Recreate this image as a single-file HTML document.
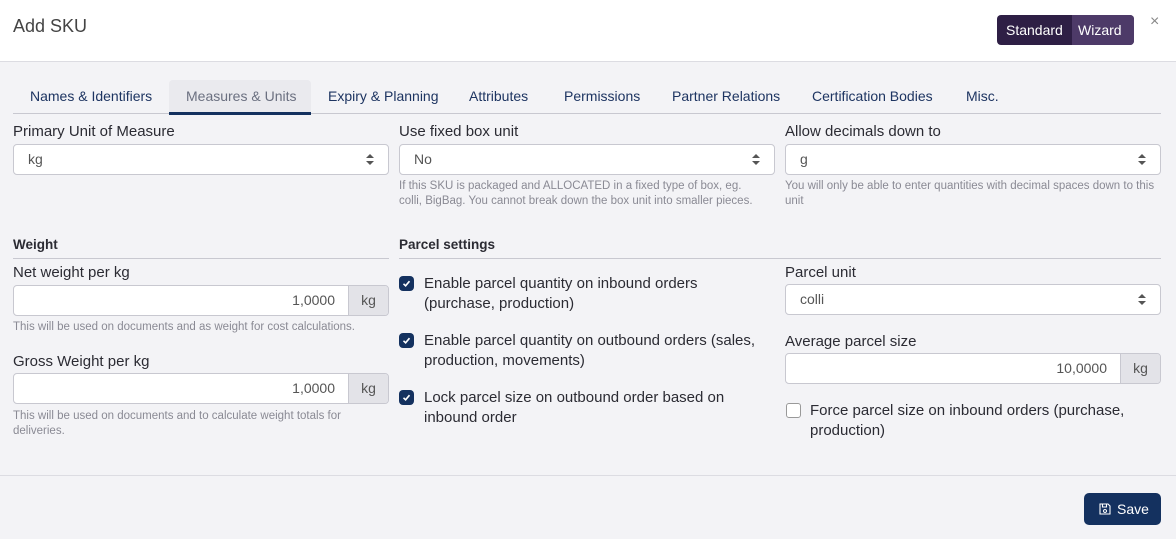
<!DOCTYPE html>
<html><head><meta charset="utf-8"><style>
*{box-sizing:border-box;margin:0;padding:0}
body{width:1176px;height:539px;background:#f3f3f6;font-family:"Liberation Sans",sans-serif;color:#2b2b33;position:relative;overflow:hidden}
.a{position:absolute;white-space:nowrap}
.hdr{position:absolute;left:0;top:0;width:1176px;height:62px;background:#fff;border-bottom:1px solid #dcdce2}
.tab{position:absolute;top:80px;height:34px;font-size:14px;color:#1d3461;line-height:32px;text-align:center}
.lbl{font-size:15px;color:#2b2b33}
.sel{position:absolute;height:31px;background:#fff;border:1px solid #c8c8d0;border-radius:4px;font-size:14px;color:#555;line-height:29px;padding-left:14px}
.sel:after{content:"";position:absolute;right:14px;top:9px;border:4px solid transparent;border-bottom:4px solid #555;border-top:none}
.sel:before{content:"";position:absolute;right:14px;top:16px;border:4px solid transparent;border-top:4px solid #555;border-bottom:none}
.inp{position:absolute;height:31px;background:#fff;border:1px solid #c8c8d0;border-radius:4px;font-size:14px;color:#555;line-height:29px;overflow:hidden}
.inp .v{position:absolute;right:53px}
.inp .u{position:absolute;right:0;top:0;width:40px;height:29px;background:#e3e3e8;border-left:1px solid #c8c8d0;text-align:center;color:#555}
.help{font-size:11.5px;color:#8a8a94;line-height:15px;white-space:normal}
.sec{font-size:13.5px;font-weight:bold;color:#2b2b33}
.line{position:absolute;height:1px;background:#c8c8d0}
.cb{position:absolute;width:15px;height:15px;border-radius:4px;background:#14315f}
.cb svg{position:absolute;left:3px;top:3px}
.ct{font-size:15px;line-height:20px;white-space:normal}
</style></head><body>
<div class="hdr"></div>
<div class="a" style="left:13px;top:16px;font-size:18px;color:#444;font-weight:300">Add SKU</div>
<div class="a" style="left:997px;top:15px;width:137px;height:30px;border-radius:4px;background:#2e1f45;overflow:hidden;font-size:14px;line-height:30px;color:#fff">
<span style="position:absolute;left:9px">Standard</span>
<span style="position:absolute;left:75px;top:0;width:62px;height:30px;background:#4d3a68;padding-left:6px">Wizard</span></div>
<div class="a" style="left:1150px;top:13px;font-size:16px;color:#888">×</div>

<div class="a" style="left:169px;top:80px;width:142px;height:34px;background:#eaeaee;border-radius:4px 4px 0 0"></div>
<div class="line" style="left:13px;top:113px;width:1148px"></div>
<div class="a" style="left:169px;top:112px;width:142px;height:3px;background:#14315f"></div>
<div class="tab" style="left:30px">Names &amp; Identifiers</div>
<div class="tab" style="left:186px;color:#6b7080">Measures &amp; Units</div>
<div class="tab" style="left:328px">Expiry &amp; Planning</div>
<div class="tab" style="left:469px">Attributes</div>
<div class="tab" style="left:564px">Permissions</div>
<div class="tab" style="left:672px">Partner Relations</div>
<div class="tab" style="left:812px">Certification Bodies</div>
<div class="tab" style="left:966px">Misc.</div>

<div class="a lbl" style="left:13px;top:123px">Primary Unit of Measure</div>
<div class="sel" style="left:13px;top:144px;width:376px">kg</div>
<div class="a lbl" style="left:399px;top:123px">Use fixed box unit</div>
<div class="sel" style="left:399px;top:144px;width:376px">No</div>
<div class="a help" style="left:399px;top:179px;width:368px">If this SKU is packaged and ALLOCATED in a fixed type of box, eg. colli, BigBag. You cannot break down the box unit into smaller pieces.</div>
<div class="a lbl" style="left:785px;top:123px">Allow decimals down to</div>
<div class="sel" style="left:785px;top:144px;width:376px">g</div>
<div class="a help" style="left:785px;top:179px;width:376px">You will only be able to enter quantities with decimal spaces down to this unit</div>

<div class="a sec" style="left:13px;top:237px">Weight</div>
<div class="line" style="left:13px;top:258px;width:376px"></div>
<div class="a sec" style="left:399px;top:237px">Parcel settings</div>
<div class="line" style="left:399px;top:258px;width:762px"></div>

<div class="a lbl" style="left:13px;top:264px">Net weight per kg</div>
<div class="inp" style="left:13px;top:285px;width:376px"><span class="v">1,0000</span><span class="u">kg</span></div>
<div class="a help" style="left:13px;top:320px">This will be used on documents and as weight for cost calculations.</div>
<div class="a lbl" style="left:13px;top:353px">Gross Weight per kg</div>
<div class="inp" style="left:13px;top:373px;width:376px"><span class="v">1,0000</span><span class="u">kg</span></div>
<div class="a help" style="left:13px;top:409px;width:370px">This will be used on documents and to calculate weight totals for deliveries.</div>

<div class="cb" style="left:399px;top:276px"><svg width="9" height="9" viewBox="0 0 9 9"><path d="M1.5 4.8L3.6 6.8 7.5 2.2" fill="none" stroke="#fff" stroke-width="1.6"/></svg></div>
<div class="a ct" style="left:424px;top:274px;width:300px">Enable parcel quantity on inbound orders (purchase, production)</div>
<div class="cb" style="left:399px;top:333px"><svg width="9" height="9" viewBox="0 0 9 9"><path d="M1.5 4.8L3.6 6.8 7.5 2.2" fill="none" stroke="#fff" stroke-width="1.6"/></svg></div>
<div class="a ct" style="left:424px;top:331px;width:355px">Enable parcel quantity on outbound orders (sales, production, movements)</div>
<div class="cb" style="left:399px;top:390px"><svg width="9" height="9" viewBox="0 0 9 9"><path d="M1.5 4.8L3.6 6.8 7.5 2.2" fill="none" stroke="#fff" stroke-width="1.6"/></svg></div>
<div class="a ct" style="left:424px;top:388px;width:340px">Lock parcel size on outbound order based on inbound order</div>

<div class="a lbl" style="left:785px;top:264px">Parcel unit</div>
<div class="sel" style="left:785px;top:284px;width:376px">colli</div>
<div class="a lbl" style="left:785px;top:333px">Average parcel size</div>
<div class="inp" style="left:785px;top:353px;width:376px"><span class="v">10,0000</span><span class="u">kg</span></div>
<div class="a" style="left:786px;top:403px;width:15px;height:15px;border:1px solid #999;border-radius:3px;background:#fff"></div>
<div class="a ct" style="left:810px;top:401px;width:350px">Force parcel size on inbound orders (purchase, production)</div>

<div class="line" style="left:0;top:475px;width:1176px;background:#dcdce2"></div>
<div class="a" style="left:1084px;top:493px;width:77px;height:32px;border-radius:5px;background:#14315f;color:#fff;font-size:14px;line-height:32px">
<svg style="position:absolute;left:15px;top:10px" width="12" height="12" viewBox="0 0 12 12"><path d="M1 1h8l2 2v8H1z M3.5 1v3h4V1 M6 6.5a1.5 1.5 0 1 0 .01 0" fill="none" stroke="#fff" stroke-width="1.1"/></svg>
<span style="position:absolute;left:33px">Save</span></div>
</body></html>
